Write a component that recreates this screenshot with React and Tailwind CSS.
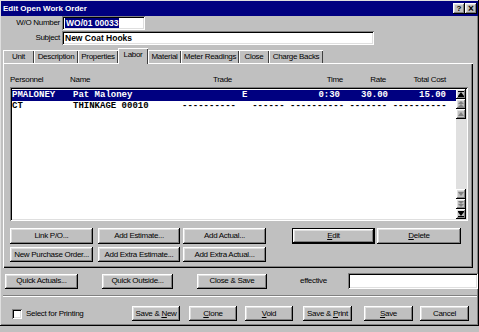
import React from 'react';

const raised = "bg-[#c0c0c0] shadow-[inset_-1px_-1px_#000,inset_1px_1px_#fff,inset_-2px_-2px_#808080,inset_2px_2px_#dfdfdf]";
const defRaised = "bg-[#c0c0c0] shadow-[inset_0_0_0_1px_#000,inset_-2px_-2px_#000,inset_2px_2px_#fff,inset_-3px_-3px_#808080,inset_3px_3px_#dfdfdf]";
const sunken = "bg-white shadow-[inset_1px_1px_#808080,inset_-1px_-1px_#fff,inset_2px_2px_#000,inset_-2px_-2px_#dfdfdf]";

const Btn = ({ className = '', def = false, children }) => (
    <button
        type="button"
        className={`${def ? defRaised : raised} flex items-center justify-center text-[8px] tracking-[-0.3px] leading-none text-black shrink-0 ${className}`}
    >
        {children}
    </button>
);

const tabs = [
    ['Unit', 'w-[31px]'],
    ['Description', 'w-[44px]'],
    ['Properties', 'w-[40px]'],
    ['Labor', 'w-[30px]'],
    ['Material', 'w-[33px]'],
    ['Meter Readings', 'w-[58px]'],
    ['Close', 'w-[30px]'],
    ['Charge Backs', 'w-[54px]'],
];

const ScrollBtn = ({ children }) => (
    <div className={`${raised} h-[10px] w-[10px] flex items-center justify-center shrink-0`}>
        <svg width="6" height="6" viewBox="0 0 6 6">{children}</svg>
    </div>
);

const App = () => {
    return (
        <div className="w-[479px] h-[332px] bg-[#c0c0c0] overflow-hidden font-['Liberation_Sans',Arial,sans-serif] text-black">
            <div className="h-[326px] pt-[1px] pl-[1px] shadow-[inset_-1px_-1px_#000,inset_1px_1px_#dfdfdf,inset_-2px_-2px_#808080]">
                {/* title bar */}
                <div className="h-[15px] w-[477px] bg-[#000080] flex items-center justify-between pl-[2px] pr-[1px]">
                    <span className="text-white font-bold text-[8px] leading-none">Edit Open Work Order</span>
                    <div className="flex">
                        <div className={`${raised} w-[12px] h-[11px] flex items-center justify-center text-[8px] font-bold leading-none`}>?</div>
                        <div className={`${raised} w-[12px] h-[11px] flex items-center justify-center text-[10px] font-bold leading-none`}>×</div>
                    </div>
                </div>

                <div className="pl-[2px]">
                    {/* header fields */}
                    <div className="flex items-center h-[14px]">
                        <span className="w-[57px] text-right text-[8px] tracking-[-0.3px] leading-none">W/O Number</span>
                        <div className={`${sunken} ml-[2px] w-[83px] h-[14px] flex items-center pl-[3px]`}>
                            <span className="bg-[#000080] text-white font-bold text-[8.5px] leading-[10px] px-[1px]">WO/01 00033</span>
                        </div>
                    </div>
                    <div className="flex items-center h-[14px] mt-[1px]">
                        <span className="w-[57px] text-right text-[8px] tracking-[-0.3px] leading-none">Subject</span>
                        <div className={`${sunken} ml-[2px] w-[312px] h-[14px] flex items-center pl-[3px]`}>
                            <span className="font-bold text-[8.5px] leading-none">New Coat Hooks</span>
                        </div>
                    </div>

                    {/* tabs */}
                    <div className="flex items-end h-[15px] mt-[3px]">
                        {tabs.map(([label, w]) =>
                            label === 'Labor' ? (
                                <div
                                    key={label}
                                    className={`${w} relative z-10 h-[16px] -mb-[1px] bg-[#c0c0c0] shadow-[inset_1px_1px_#fff,inset_-1px_0_#404040] flex items-center justify-center text-[8px] tracking-[-0.3px] leading-none pb-[2px]`}
                                >
                                    {label}
                                </div>
                            ) : (
                                <div
                                    key={label}
                                    className={`${w} h-[13px] shadow-[inset_1px_1px_#fff,inset_-1px_0_#404040] flex items-center justify-center text-[8px] tracking-[-0.3px] leading-none`}
                                >
                                    {label}
                                </div>
                            )
                        )}
                    </div>

                    {/* tab panel */}
                    <div className="w-[470px] h-[205px] shadow-[inset_1px_1px_#fff,inset_-1px_-1px_#000,inset_-2px_-2px_#808080] pt-[12px]">
                        <div className="flex h-[10px] items-center pl-[7px] text-[8px] tracking-[-0.3px] leading-none">
                            <span className="w-[60px]">Personnel</span>
                            <span className="w-[100px]">Name</span>
                            <span className="w-[62px] text-right">Trade</span>
                            <span className="w-[111px] text-right">Time</span>
                            <span className="w-[43px] text-right">Rate</span>
                            <span className="w-[60px] text-right">Total Cost</span>
                        </div>

                        <div className={`${sunken} ml-[7px] mt-[2px] w-[458px] h-[134px] p-[2px] flex`}>
                            <div className="flex-1 pt-[1px] font-['Liberation_Mono','Courier_New',monospace] font-bold text-[9px] leading-none">
                                <div className="flex items-center h-[11px] bg-[#000080] text-white whitespace-pre">
                                    <span className="w-[61px]">PMALONEY</span>
                                    <span className="w-[109px]">Pat Maloney</span>
                                    <span className="w-[60px]"></span>
                                    <span className="w-[20px]">E</span>
                                    <span className="w-[78px] text-right">0:30</span>
                                    <span className="w-[48px] text-right">30.00</span>
                                    <span className="w-[58px] text-right">15.00</span>
                                </div>
                                <div className="flex items-center h-[11px] whitespace-pre">
                                    <span className="w-[61px]">CT</span>
                                    <span className="w-[109px]">THINKAGE 00010</span>
                                    <span>----------   ------ ---------- ------- ----------</span>
                                </div>
                            </div>
                            <div className="w-[10px] flex flex-col bg-[#e0e0e0]">
                                <ScrollBtn>
                                    <rect x="0" y="0" width="6" height="1" fill="#000" />
                                    <polygon points="3,1 6,5 0,5" fill="#000" />
                                    <rect x="0" y="5" width="6" height="1" fill="#000" />
                                </ScrollBtn>
                                <ScrollBtn>
                                    <polygon points="3,0 6,3 0,3" fill="#808080" />
                                    <polygon points="3,3 6,6 0,6" fill="#808080" />
                                </ScrollBtn>
                                <ScrollBtn>
                                    <polygon points="3,1 6,5 0,5" fill="#808080" />
                                </ScrollBtn>
                                <div className="flex-1"></div>
                                <ScrollBtn>
                                    <polygon points="0,1 6,1 3,5" fill="#808080" />
                                </ScrollBtn>
                                <ScrollBtn>
                                    <polygon points="0,0 6,0 3,3" fill="#808080" />
                                    <polygon points="0,3 6,3 3,6" fill="#808080" />
                                </ScrollBtn>
                                <ScrollBtn>
                                    <rect x="0" y="0" width="6" height="1" fill="#000" />
                                    <polygon points="0,1 6,1 3,5" fill="#000" />
                                    <rect x="0" y="5" width="6" height="1" fill="#000" />
                                </ScrollBtn>
                            </div>
                        </div>

                        <div className="flex h-[16px] mt-[7px]">
                            <Btn className="ml-[7px] w-[83px]">Link P/O...</Btn>
                            <Btn className="ml-[5px] w-[82px]">Add Estimate...</Btn>
                            <Btn className="ml-[3px] w-[83px]">Add Actual...</Btn>
                            <Btn def className="ml-[26px] w-[83px]"><span><u>E</u>dit</span></Btn>
                            <Btn className="ml-[2px] w-[84px]"><span><u>D</u>elete</span></Btn>
                        </div>
                        <div className="flex h-[15px] mt-[3px]">
                            <Btn className="ml-[7px] w-[83px]">New Purchase Order...</Btn>
                            <Btn className="ml-[5px] w-[82px]">Add Extra Estimate...</Btn>
                            <Btn className="ml-[3px] w-[83px]">Add Extra Actual...</Btn>
                        </div>
                    </div>

                    {/* quick row */}
                    <div className="flex items-center h-[16px] mt-[5px]">
                        <Btn className="ml-[2px] w-[73px] h-[15px]">Quick Actuals...</Btn>
                        <Btn className="ml-[24px] w-[71px] h-[15px]">Quick Outside...</Btn>
                        <Btn className="ml-[24px] w-[70px] h-[15px]">Close &amp; Save</Btn>
                        <span className="ml-[33px] w-[48px] text-[8px] tracking-[-0.3px] leading-none">effective</span>
                        <div className={`${sunken} w-[130px] h-[16px] shrink-0`}></div>
                    </div>

                    {/* separator */}
                    <div className="mt-[6px] w-[474px] border-t border-t-[#808080] border-b border-b-white"></div>

                    {/* bottom row */}
                    <div className="flex items-center h-[15px] mt-[9px]">
                        <div className="w-[129px] flex items-center shrink-0">
                            <div className={`${sunken} ml-[9px] w-[10px] h-[10px]`}></div>
                            <span className="ml-[4px] text-[8px] tracking-[-0.3px] leading-none">Select for Printing</span>
                        </div>
                        <Btn className="w-[48px] h-[15px]"><span>Save &amp; <u>N</u>ew</span></Btn>
                        <Btn className="ml-[9px] w-[48px] h-[15px]"><span><u>C</u>lone</span></Btn>
                        <Btn className="ml-[8px] w-[48px] h-[15px]"><span><u>V</u>oid</span></Btn>
                        <Btn className="ml-[10px] w-[49px] h-[15px]"><span>Save &amp; <u>P</u>rint</span></Btn>
                        <Btn className="ml-[12px] w-[49px] h-[15px]"><span><u>S</u>ave</span></Btn>
                        <Btn className="ml-[7px] w-[49px] h-[15px]">Cancel</Btn>
                    </div>
                </div>
            </div>
        </div>
    );
};

export default App;
